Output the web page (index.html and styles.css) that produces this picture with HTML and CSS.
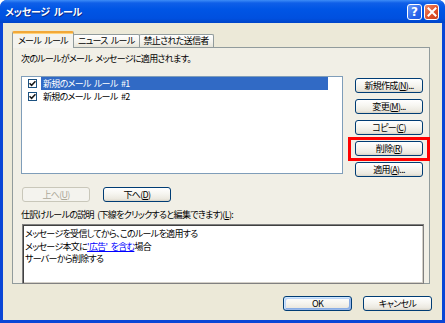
FILE: index.html
```html
<!DOCTYPE html>
<html>
  <head>
    <meta charset="UTF-8" />
    <title>メッセージ ルール</title>
    <link rel="stylesheet" href="styles.css">
  </head>
  <body>
    <div class="window">
      <div class="titlebar">
        <span class="title">メッセージ ルール</span>
        <span class="tbtn help">?</span>
        <span class="tbtn close">
          <svg width="10" height="10" viewBox="0 0 10 10">
            <path d="M1.5 1.5 L8.5 8.5 M8.5 1.5 L1.5 8.5" stroke="#fff" stroke-width="2" stroke-linecap="square" />
          </svg>
        </span>
      </div>

      <div class="client">
        <div class="tabs">
          <div class="tab active">メール ルール</div>
          <div class="tab">ニュース ルール</div>
          <div class="tab">禁止された送信者</div>
        </div>

        <div class="panel">
          <div class="caption">次のルールがメール メッセージに適用されます。</div>

          <div class="rules-row">
            <div class="rule-list">
              <div class="rule selected">
                <span class="check">
                  <svg width="7" height="7" viewBox="0 0 7 7">
                    <path d="M0.5 3.2 L2.6 5.3 L6.5 1.2" stroke="#1a1a1a" stroke-width="1.6" fill="none" />
                  </svg>
                </span>
                <span class="name">新規のメール ルール #1</span>
              </div>
              <div class="rule">
                <span class="check">
                  <svg width="7" height="7" viewBox="0 0 7 7">
                    <path d="M0.5 3.2 L2.6 5.3 L6.5 1.2" stroke="#1a1a1a" stroke-width="1.6" fill="none" />
                  </svg>
                </span>
                <span class="name">新規のメール ルール #2</span>
              </div>
            </div>

            <div class="side-buttons">
              <button class="btn">新規作成(<u>N</u>)...</button>
              <button class="btn">変更(<u>M</u>)...</button>
              <button class="btn">コピー(<u>C</u>)</button>
              <button class="btn marked">削除(<u>R</u>)</button>
              <button class="btn">適用(<u>A</u>)...</button>
            </div>
          </div>

          <div class="move-buttons">
            <button class="btn" disabled>上へ(<u>U</u>)</button>
            <button class="btn">下へ(<u>D</u>)</button>
          </div>

          <div class="caption label">仕訳けルールの説明 (下線をクリックすると編集できます)(<u>L</u>):</div>

          <div class="description">
            <div>メッセージを受信してから、このルールを適用する</div>
            <div>メッセージ本文に<a href="#">'広告' を含む</a>場合</div>
            <div>サーバーから削除する</div>
          </div>
        </div>

        <div class="dialog-buttons">
          <button class="btn default">OK</button>
          <button class="btn">キャンセル</button>
        </div>
      </div>
    </div>
  </body>
</html>
```

FILE: styles.css
```css
body {
  margin: 0;
  background: #ffffff;
  font-family: "Noto Sans CJK JP", sans-serif;
  font-size: 9px;
  letter-spacing: -0.7px;
  word-spacing: 2px;
  font-feature-settings: "palt";
  color: #000;
}

.window {
  width: 445px;
  height: 323px;
  box-sizing: border-box;
  display: flex;
  flex-direction: column;
  background: #0a46d6;
  border-radius: 7px 7px 0 0;
  overflow: hidden;
}

/* title bar */
.titlebar {
  height: 23px;
  flex: none;
  display: flex;
  align-items: center;
  padding: 0 6px 0 5px;
  background: linear-gradient(#3d8cf7 0, #0f5fe8 3px, #0055e5 40%, #0050df 80%, #0044c8 100%);
}

.title {
  flex: 1;
  color: #fff;
  font-weight: bold;
  font-size: 10px;
  letter-spacing: -0.3px;
  text-shadow: 1px 1px 0 #0a2a8a;
}

.tbtn {
  width: 15px;
  height: 16px;
  box-sizing: border-box;
  border: 1px solid #fff;
  border-radius: 3px;
  display: flex;
  align-items: center;
  justify-content: center;
  color: #fff;
  font-family: "DejaVu Sans", sans-serif;
  font-weight: bold;
  font-size: 12px;
  letter-spacing: 0;
}

.help {
  margin-right: 2px;
  background: linear-gradient(135deg, #6d9df8, #2a66ec 60%, #1b55e0);
}

.close {
  background: linear-gradient(135deg, #f08a68, #e0512a 55%, #c9401e);
}

/* client area */
.client {
  flex: 1;
  margin: 0 3px 3px 3px;
  padding: 9px 12px 0 9px;
  background: #ece9d8;
  display: flex;
  flex-direction: column;
}

.tabs {
  display: flex;
  align-items: flex-end;
  height: 15px;
  position: relative;
  z-index: 1;
}

.tab {
  height: 12px;
  line-height: 12px;
  padding: 0 4px;
  border: 1px solid #919b9c;
  border-bottom: none;
  border-radius: 2px 2px 0 0;
  background: linear-gradient(#ffffff, #f3f2ec 60%, #e6e4d8);
  white-space: nowrap;
  margin-right: -1px;
}

.tab.active {
  height: 15px;
  padding: 0 5px;
  background: #f4f3ee;
  border-top: 2px solid #f2a839;
  box-shadow: inset 0 1px 0 #ffd27a;
  margin-bottom: -1px;
  line-height: 15px;
}

.panel {
  height: 237px;
  box-sizing: border-box;
  border: 1px solid #919b9c;
  background: #f1efe6;
  padding: 5px 6px 0 8px;
}

.caption {
  line-height: 12px;
  height: 12px;
  white-space: nowrap;
}

.rules-row {
  display: flex;
  margin-top: 11px;
}

.rule-list {
  width: 322px;
  height: 98px;
  box-sizing: border-box;
  border: 1px solid #7f9db9;
  background: #fff;
}

.rule {
  height: 13px;
  display: flex;
  align-items: center;
  padding-left: 6px;
}

.check {
  width: 9px;
  height: 9px;
  box-sizing: border-box;
  border: 1px solid #1c5180;
  background: #fff;
  display: flex;
  align-items: center;
  justify-content: center;
  margin-right: 4px;
}

.name {
  width: 285px;
  height: 13px;
  line-height: 13px;
  padding-left: 2px;
}

.rule.selected .name {
  background: #316ac5;
  color: #fff;
}

.side-buttons {
  display: flex;
  flex-direction: column;
  gap: 6px;
  margin: 2px 0 0 12px;
}

/* push buttons */
.btn {
  width: 68px;
  height: 15px;
  padding: 0;
  font: inherit;
  letter-spacing: inherit;
  word-spacing: inherit;
  line-height: 13px;
  color: #000;
  border: 1px solid #003c74;
  border-radius: 3px;
  background: linear-gradient(#ffffff, #f6f5f0 45%, #ebe8df 85%, #d8d3c6);
  white-space: nowrap;
  position: relative;
}

.btn[disabled] {
  color: #aca899;
  border-color: #c9c7ba;
  background: #f4f3ee;
}

.btn.marked::after {
  content: "";
  position: absolute;
  left: -8px;
  right: -8px;
  top: -5px;
  bottom: -6px;
  border: 3px solid #ff0000;
}

.btn.default {
  box-shadow: inset 1px 1px 0 #cee7ff, inset -1px -1px 0 #98b8ea, inset 2px 2px 0 #bcd4f6, inset -2px -2px 0 #89ade4;
}

.move-buttons {
  display: flex;
  gap: 13px;
  margin: 10px 0 0 1px;
}

.label {
  margin-top: 7px;
}

.description {
  width: 402px;
  height: 60px;
  box-sizing: border-box;
  margin: 3px 0 0 1px;
  border: 1px solid #808080;
  box-shadow: inset 1px 1px 0 #404040, inset -1px -1px 0 #d4d0c8;
  background: #fff;
  padding: 3px 2px 0 2px;
  line-height: 12.5px;
}

.description a {
  color: #0000ff;
  text-decoration: underline;
}

.dialog-buttons {
  display: flex;
  justify-content: flex-end;
  gap: 11px;
  margin: 12px -2px 0 0;
}

.dialog-buttons .btn {
  width: 69px;
}
```
